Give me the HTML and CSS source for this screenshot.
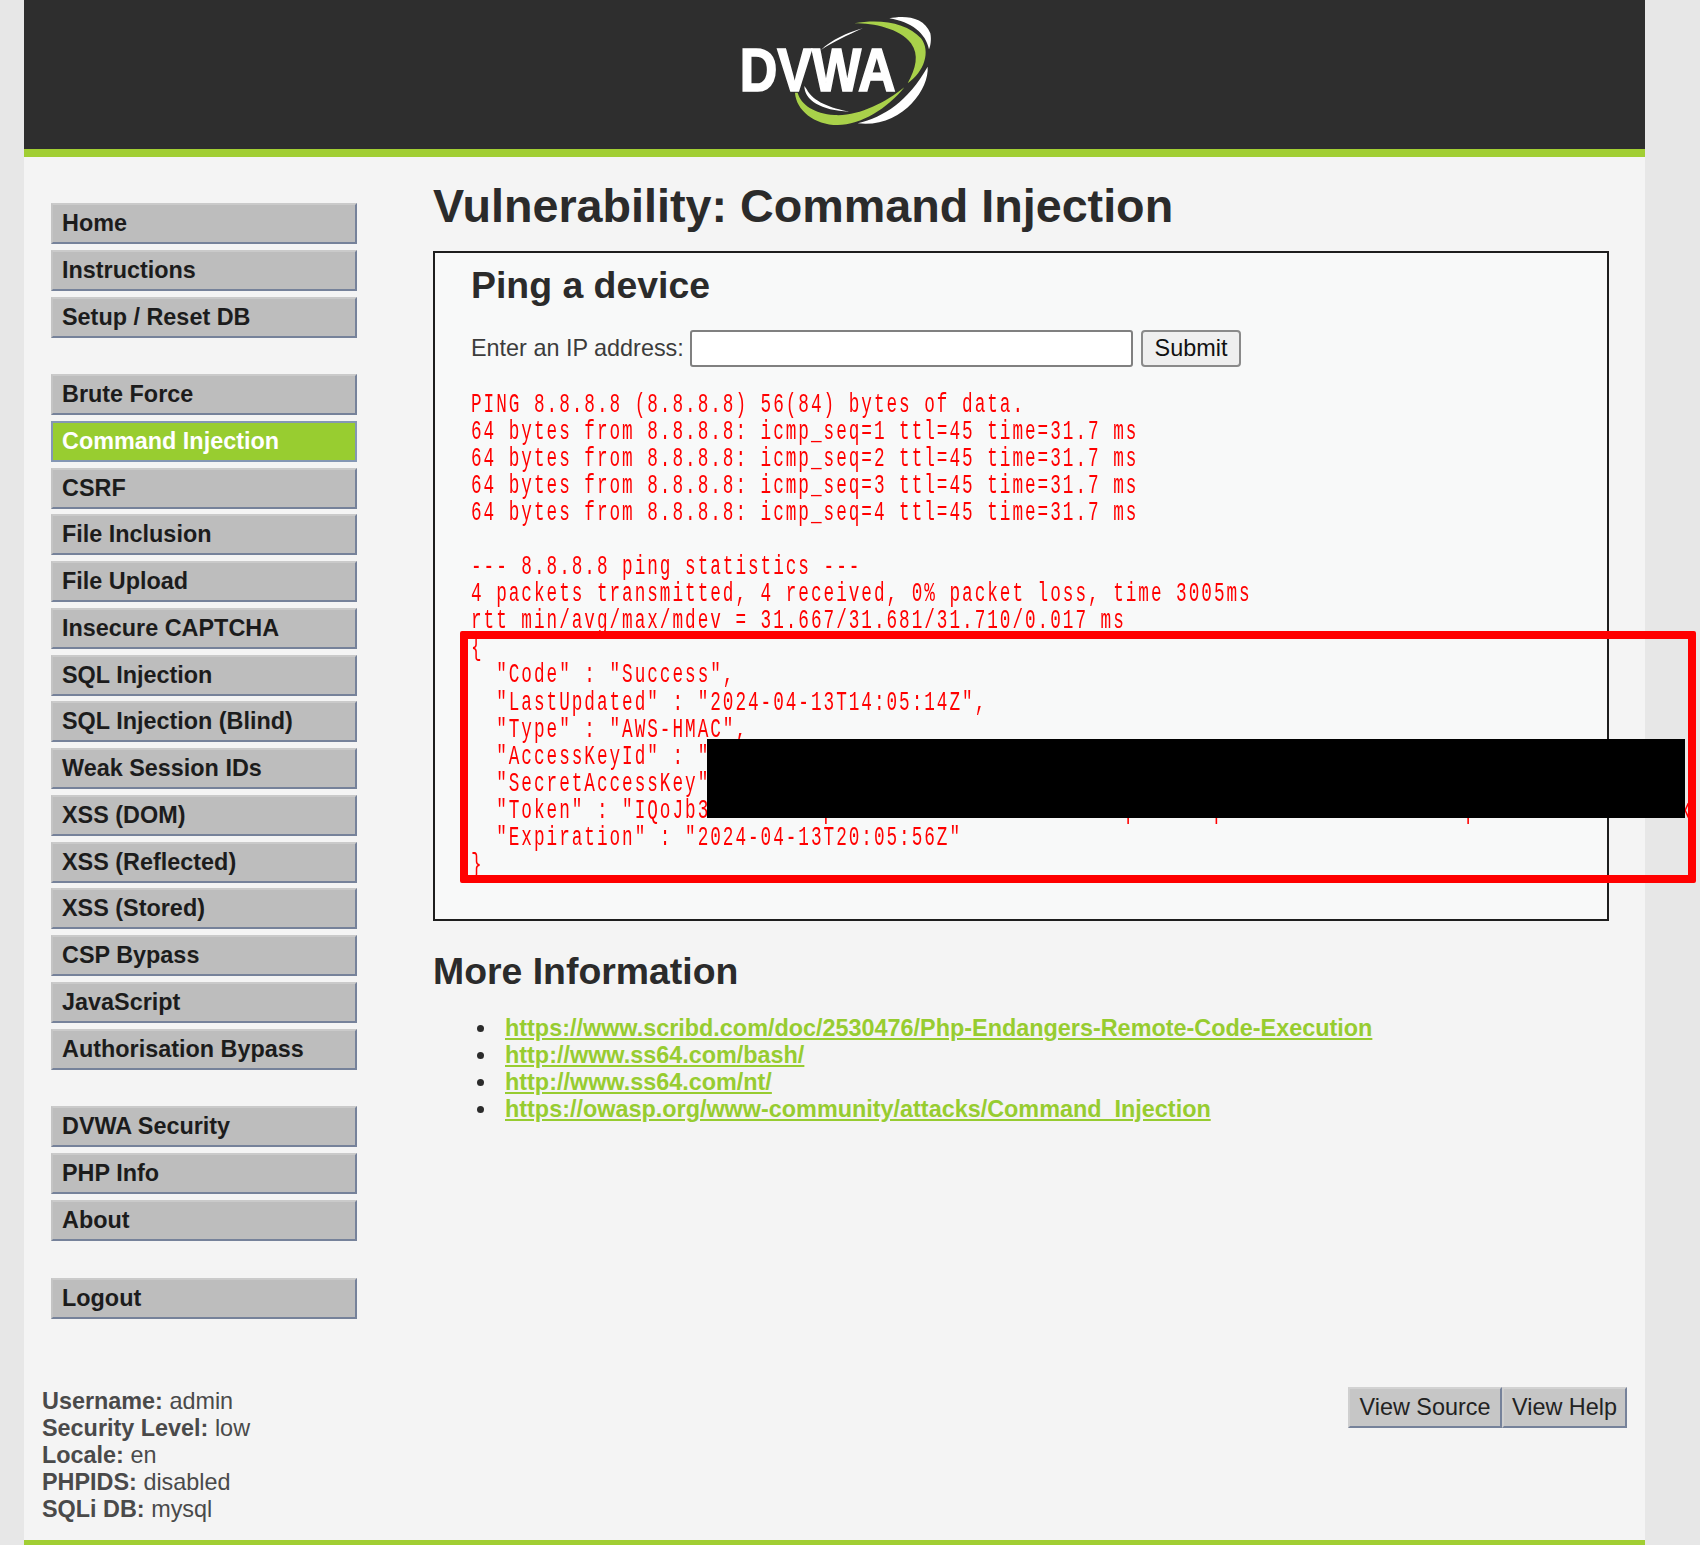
FILE: index.html
```html
<!DOCTYPE html>
<html lang="en">
<head>
<meta charset="utf-8">
<title>Vulnerability: Command Injection</title>
<link rel="stylesheet" href="styles.css">
</head>
<body>
<div class="page">
  <header class="header">
    <svg class="logo" viewBox="282 0 600 447" width="200" height="149" aria-label="DVWA logo">
      <path class="arc-white" d="M665 85C620 98 570 120 540 150C575 126 620 106 665 85Z"/>
      <path class="arc-white" d="M490 258C490 300 540 332 625 335C570 325 515 305 497 268Z"/>
      <text class="logo-text" x="296" y="272" textLength="468" lengthAdjust="spacingAndGlyphs">DVWA</text>
      <path class="arc-green" d="M640 70C720 55 800 70 840 115C870 155 850 215 800 250C825 205 835 165 810 130C775 85 700 70 640 70Z"/>
      <path class="arc-green" d="M462 278C465 330 520 375 590 375C660 375 740 325 790 262C730 310 650 350 580 345C520 340 480 315 470 278Z"/>
      <path class="arc-white" d="M745 55C790 45 850 50 868 100C872 120 868 140 864 148C855 100 810 65 745 55Z"/>
      <path class="arc-white" d="M650 370C730 350 800 305 860 200C865 270 780 385 650 370Z"/>
    </svg>
  </header>
  <div class="content">
    <nav class="sidebar">
      <ul class="nav-group">
        <li><a class="nav-item">Home</a></li>
        <li><a class="nav-item">Instructions</a></li>
        <li><a class="nav-item">Setup / Reset DB</a></li>
      </ul>
      <ul class="nav-group">
        <li><a class="nav-item">Brute Force</a></li>
        <li><a class="nav-item nav-active">Command Injection</a></li>
        <li><a class="nav-item">CSRF</a></li>
        <li><a class="nav-item">File Inclusion</a></li>
        <li><a class="nav-item">File Upload</a></li>
        <li><a class="nav-item">Insecure CAPTCHA</a></li>
        <li><a class="nav-item">SQL Injection</a></li>
        <li><a class="nav-item">SQL Injection (Blind)</a></li>
        <li><a class="nav-item">Weak Session IDs</a></li>
        <li><a class="nav-item">XSS (DOM)</a></li>
        <li><a class="nav-item">XSS (Reflected)</a></li>
        <li><a class="nav-item">XSS (Stored)</a></li>
        <li><a class="nav-item">CSP Bypass</a></li>
        <li><a class="nav-item">JavaScript</a></li>
        <li><a class="nav-item">Authorisation Bypass</a></li>
      </ul>
      <ul class="nav-group">
        <li><a class="nav-item">DVWA Security</a></li>
        <li><a class="nav-item">PHP Info</a></li>
        <li><a class="nav-item">About</a></li>
      </ul>
      <ul class="nav-group">
        <li><a class="nav-item">Logout</a></li>
      </ul>
    </nav>
    <main class="main">
      <h1 class="title">Vulnerability: Command Injection</h1>
      <section class="box">
        <h2 class="box-title">Ping a device</h2>
        <form class="ping-form">
          <label class="ping-label">Enter an IP address:</label>
          <input class="ping-input" type="text">
          <button class="ping-submit" type="button">Submit</button>
        </form>
<pre class="output">PING 8.8.8.8 (8.8.8.8) 56(84) bytes of data.
64 bytes from 8.8.8.8: icmp_seq=1 ttl=45 time=31.7 ms
64 bytes from 8.8.8.8: icmp_seq=2 ttl=45 time=31.7 ms
64 bytes from 8.8.8.8: icmp_seq=3 ttl=45 time=31.7 ms
64 bytes from 8.8.8.8: icmp_seq=4 ttl=45 time=31.7 ms

--- 8.8.8.8 ping statistics ---
4 packets transmitted, 4 received, 0% packet loss, time 3005ms
rtt min/avg/max/mdev = 31.667/31.681/31.710/0.017 ms
{
  "Code" : "Success",
  "LastUpdated" : "2024-04-13T14:05:14Z",
  "Type" : "AWS-HMAC",
  "AccessKeyId" : "
  "SecretAccessKey" : "
  "Token" : "IQoJb3xxxxxxxxxpxxxxxxxxxxxxxxxxxxxxxxxpxxxxxxpxxxxxxxxxxxxxxxxxxxpxxxxxxxxxxxxxxxxx
  "Expiration" : "2024-04-13T20:05:56Z"
}</pre>
      </section>
      <h2 class="more-title">More Information</h2>
      <ul class="links">
        <li class="links-item"><a class="link">https://www.scribd.com/doc/2530476/Php-Endangers-Remote-Code-Execution</a></li>
        <li class="links-item"><a class="link">http://www.ss64.com/bash/</a></li>
        <li class="links-item"><a class="link">http://www.ss64.com/nt/</a></li>
        <li class="links-item"><a class="link">https://owasp.org/www-community/attacks/Command_Injection</a></li>
      </ul>
    </main>
  </div>
  <footer class="footer">
    <div class="info">
      <div><strong>Username:</strong> admin</div>
      <div><strong>Security Level:</strong> low</div>
      <div><strong>Locale:</strong> en</div>
      <div><strong>PHPIDS:</strong> disabled</div>
      <div><strong>SQLi DB:</strong> mysql</div>
    </div>
    <div class="actions">
      <a class="action action-source">View Source</a>
      <a class="action action-help">View Help</a>
    </div>
  </footer>
</div>
<div class="annotation"></div>
<div class="redaction"></div>
</body>
</html>
```
FILE: styles.css
```css
html, body {
  margin: 0;
  height: 1545px;
  overflow: hidden;
}
body {
  position: relative;
  background: #e7e7e7;
  color: #3c3c3c;
  font-family: "Liberation Sans", Arial, sans-serif;
  font-size: 23.4px;
}
.page {
  margin-left: 24px;
  width: 1621px;
  height: 1545px;
  box-sizing: border-box;
  display: flex;
  flex-direction: column;
  background: #f4f4f4;
  border-bottom: 5px solid #a1ce33;
  filter: blur(0.45px);
}
.header {
  height: 149px;
  background: #2e2e2e;
  border-bottom: 8px solid #a1ce33;
  display: flex;
  justify-content: center;
}
.logo { display: block; }
.logo-text {
  font-family: "Liberation Sans", Arial, sans-serif;
  font-weight: 700;
  font-size: 185px;
  fill: #fff;
  stroke: #fff;
  stroke-width: 5px;
}
.arc-green { fill: #a9d14a; }
.arc-white { fill: #fff; }

.content { display: flex; }
.sidebar {
  width: 409px;
  box-sizing: border-box;
  padding: 46px 0 0 27px;
  display: flex;
  flex-direction: column;
  gap: 36.7px;
}
.nav-group {
  list-style: none;
  margin: 0;
  padding: 0;
  display: flex;
  flex-direction: column;
  gap: 5.75px;
}
.nav-item {
  display: block;
  box-sizing: border-box;
  width: 306px;
  height: 41px;
  line-height: 37px;
  padding-left: 9px;
  background: #bdbdbd;
  border: 2px solid;
  border-color: #cacaca #76829a #76829a #c4c4c4;
  color: #1c1c1c;
  font-weight: 700;
}
.nav-active {
  background: #98cd30;
  border-color: #8497b4;
  color: #fff;
}

.main { flex: 1; padding-top: 24px; }
.title {
  margin: 0 0 20px;
  font-size: 46.7px;
  line-height: 50px;
  color: #2b2b2b;
}
.box {
  box-sizing: border-box;
  width: 1176px;
  height: 670px;
  padding: 11px 0 0 36px;
  background: #f8f9f9;
  border: 2px solid #1e1e1e;
}
.box-title {
  margin: 0 0 24px;
  font-size: 37.4px;
  line-height: 42px;
  color: #2b2b2b;
}
.ping-form {
  display: flex;
  align-items: center;
  height: 37px;
}
.ping-label { width: 219px; flex: none; }
.ping-input {
  box-sizing: border-box;
  width: 443px;
  height: 37px;
  margin: 0 8px 0 0;
  padding: 0;
  background: #fff;
  border: 2px solid #808080;
  border-radius: 3px;
}
.ping-submit {
  box-sizing: border-box;
  width: 100px;
  height: 37px;
  padding: 0;
  background: #efefef;
  border: 2px solid #8a8a8a;
  border-radius: 4px;
  color: #111;
  font-family: inherit;
  font-size: 23.4px;
}
.output {
  margin: 25px 0 0;
  width: 1864px;
  font-family: "Liberation Mono", monospace;
  font-size: 27px;
  letter-spacing: 3px;
  line-height: 27.05px;
  color: #ff0000;
  transform: scaleX(0.6557);
  transform-origin: left top;
}

.more-title {
  margin: 30px 0 24px;
  font-size: 37.4px;
  line-height: 40px;
  color: #2b2b2b;
}
.links {
  margin: 0;
  padding-left: 72px;
  line-height: 27.1px;
  list-style: none;
}
.links-item { position: relative; }
.links-item::before {
  content: "";
  position: absolute;
  left: -28px;
  top: 10px;
  width: 7px;
  height: 7px;
  border-radius: 50%;
  background: #2b2b2b;
}
.link {
  color: #97cc30;
  text-decoration: underline;
  font-weight: 700;
}

.footer {
  margin-top: auto;
  padding: 0 18px 17px 18px;
  display: flex;
  justify-content: space-between;
  align-items: flex-start;
}
.info { line-height: 27.1px; color: #4a4a4a; }
.actions { display: flex; margin-top: -1px; }
.action {
  box-sizing: border-box;
  height: 41px;
  line-height: 37px;
  text-align: center;
  background: #c6c6c6;
  border: 2px solid;
  border-color: #d2d2d2 #76829a #76829a #cfcfcf;
  color: #222;
}
.action-source { width: 154px; }
.action-help { width: 125px; }

.annotation {
  position: absolute;
  left: 460px;
  top: 631px;
  width: 1236px;
  height: 252px;
  box-sizing: border-box;
  border: 8px solid #ff0000;
  border-radius: 2px;
}
.redaction {
  position: absolute;
  left: 707px;
  top: 739px;
  width: 978px;
  height: 79px;
  background: #000;
}
```
